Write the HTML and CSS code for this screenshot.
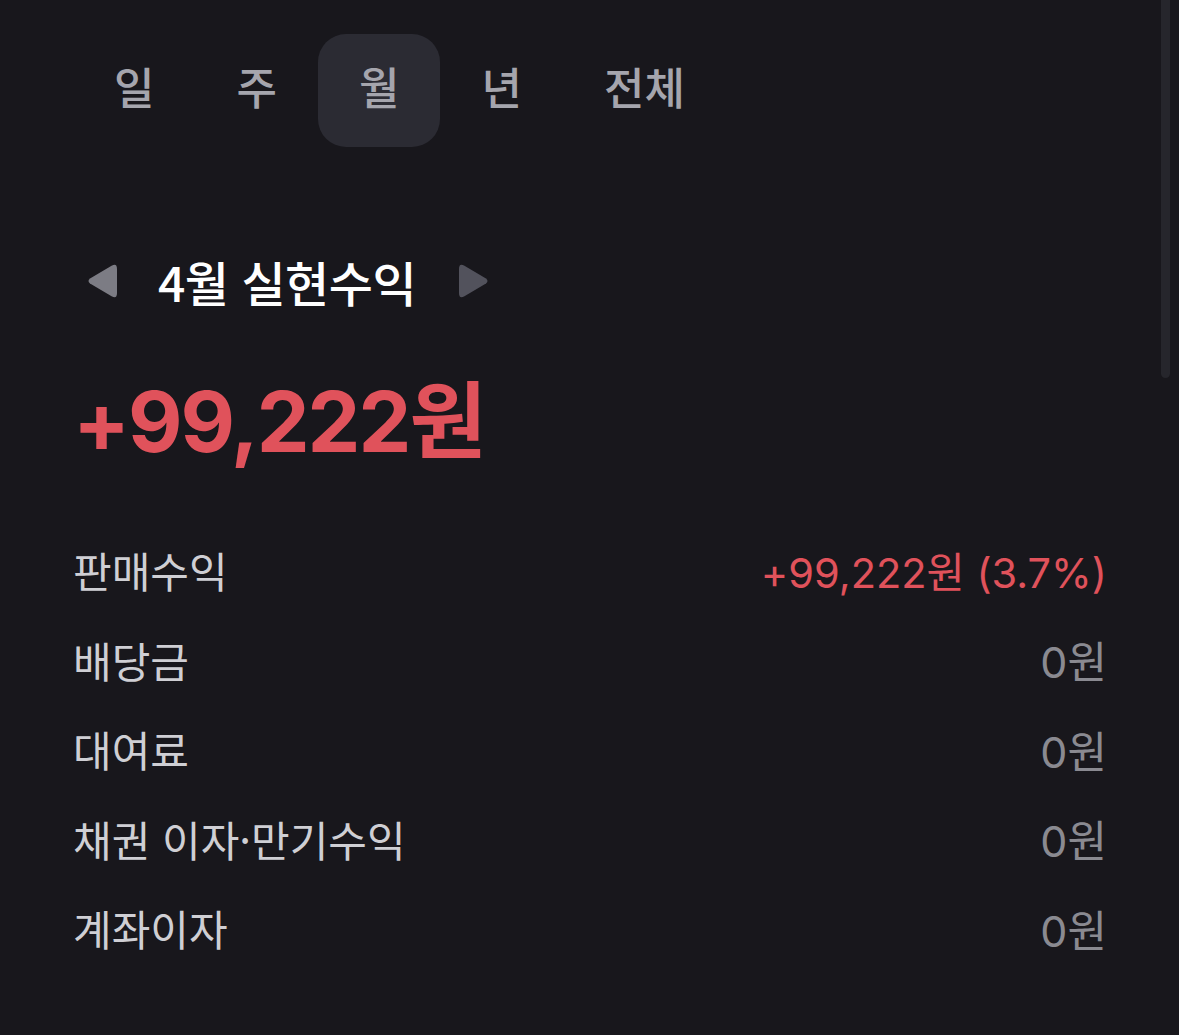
FILE: index.html
```html
<!DOCTYPE html>
<html lang="ko">

<head>
	<meta charset="UTF-8">
	<meta name="viewport" content="width=device-width, initial-scale=1.0">
	<title>실현수익</title>
	<link rel="stylesheet" href="styles.css">
</head>

<body>

	<div class="scroll-thumb"></div>

	<nav class="tabs">
		<div class="tab">일</div>
		<div class="tab">주</div>
		<div class="tab active">월</div>
		<div class="tab">년</div>
		<div class="tab">전체</div>
	</nav>

	<div class="period">
		<svg class="arrow prev" width="32" height="34" viewBox="0 0 32 34">
			<path d="M4 19.5 Q1 17 4 14.5 L26 1.5 Q31 -1 31 5 L31 29 Q31 35 26 32.5 Z" fill="#7c7c84" />
		</svg>
		<h2 class="period-title">4월 실현수익</h2>
		<svg class="arrow next" width="32" height="34" viewBox="0 0 32 34">
			<path d="M28 19.5 Q31 17 28 14.5 L6 1.5 Q1 -1 1 5 L1 29 Q1 35 6 32.5 Z" fill="#52525c" />
		</svg>
	</div>

	<div class="total">+99,222원</div>

	<ul class="rows">
		<li class="row">
			<span class="label">판매수익</span>
			<span class="value up">+99,222원 (3.7%)</span>
		</li>
		<li class="row">
			<span class="label">배당금</span>
			<span class="value">0원</span>
		</li>
		<li class="row">
			<span class="label">대여료</span>
			<span class="value">0원</span>
		</li>
		<li class="row">
			<span class="label">채권 이자·만기수익</span>
			<span class="value">0원</span>
		</li>
		<li class="row">
			<span class="label">계좌이자</span>
			<span class="value">0원</span>
		</li>
	</ul>

</body>

</html>
```

FILE: styles.css
```css
body {
	font-family: 'Inter', 'Noto Sans CJK KR', sans-serif;
	background-color: #18171c;
	color: #cfcfd4;
	margin: 0;
	padding: 34px 72px 0 73px;
	height: 1035px;
	box-sizing: border-box;
	overflow: hidden;
}

.scroll-thumb {
	position: absolute;
	top: -6px;
	right: 9px;
	width: 9px;
	height: 384px;
	border-radius: 5px;
	background-color: #26262c;
}

.tabs {
	display: flex;
}

.tab {
	height: 113px;
	padding: 0 41px 10px;
	box-sizing: border-box;
	display: flex;
	align-items: center;
	border-radius: 28px;
	font-family: 'Noto Sans CJK KR', sans-serif;
	font-size: 44px;
	font-weight: 500;
	color: #a5a5ad;
}

.tab.active {
	background-color: #2b2b33;
}

.period {
	display: flex;
	align-items: center;
	margin: 104px 0 0 13px;
	height: 60px;
}

.period-title {
	margin: 0 42px 0 40px;
	font-family: 'Noto Sans CJK KR', sans-serif;
	font-size: 48px;
	font-weight: 500;
	color: #ffffff;
	letter-spacing: -0.5px;
}

.total {
	margin-top: 61px;
	height: 100px;
	line-height: 100px;
	font-size: 84px;
	font-weight: 700;
	color: #e0525b;
	letter-spacing: -2px;
}

.rows {
	list-style: none;
	margin: 53px 0 0;
	padding: 0;
}

.row {
	display: flex;
	justify-content: space-between;
	align-items: center;
	height: 89.5px;
	font-size: 42px;
}

.label {
	font-family: 'Noto Sans CJK KR', sans-serif;
	color: #cfcfd4;
}

.value {
	color: #8a8a91;
	font-size: 43px;
}

.value.up {
	color: #e0525b;
	font-size: 41.5px;
}
```
